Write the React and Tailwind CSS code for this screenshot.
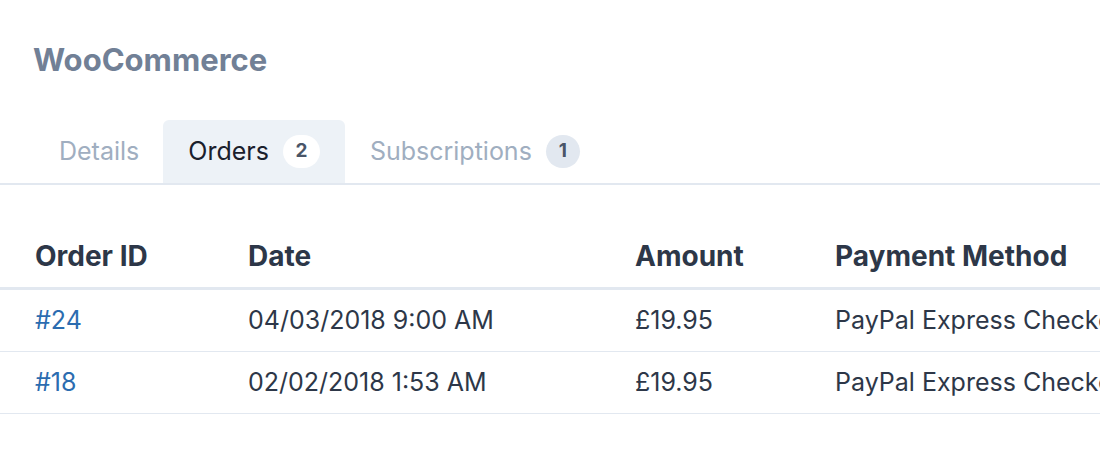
import React from 'react';

const orders = [
  { id: '#24', date: '04/03/2018 9:00 AM', amount: '£19.95', method: 'PayPal Express Checkout' },
  { id: '#18', date: '02/02/2018 1:53 AM', amount: '£19.95', method: 'PayPal Express Checkout' },
];

export default function App() {
  return (
    <div className="w-[1100px] h-[450px] overflow-hidden bg-white font-['Inter',sans-serif]">
      <h2 className="pl-[33px] pt-[42px] text-[31px] leading-[36px] font-bold text-[#718096]">WooCommerce</h2>

      {/* Tabs */}
      <div className="mt-[42px] flex px-[35px] border-b-2 border-[#e2e8f0] text-[25px]">
        <div className="h-[63px] px-[24px] flex items-center text-[#a0aec0]">Details</div>
        <div className="h-[63px] px-[25px] flex items-center rounded-t-md bg-[#edf2f7] text-[#1a202c]">
          Orders
          <span className="ml-[14px] h-[33px] min-w-[37px] px-2 rounded-full bg-white text-[#4a5568] text-[19px] font-bold flex items-center justify-center">2</span>
        </div>
        <div className="h-[63px] px-[25px] flex items-center text-[#a0aec0]">
          Subscriptions
          <span className="ml-[14px] h-[33px] min-w-[34px] px-2 rounded-full bg-[#e2e8f0] text-[#4a5568] text-[19px] font-bold flex items-center justify-center">1</span>
        </div>
      </div>

      {/* Orders table */}
      <div className="mt-[39px] text-[25px] text-[#2d3748] whitespace-nowrap">
        <div className="flex h-[66px] items-center border-b-[3px] border-[#e2e8f0] text-[28px] font-bold">
          <div className="w-[213px] shrink-0 pl-[35px]">Order ID</div>
          <div className="w-[387px] shrink-0 pl-[35px]">Date</div>
          <div className="w-[200px] shrink-0 pl-[35px]">Amount</div>
          <div className="flex-1 pl-[35px]">Payment Method</div>
        </div>
        {orders.map((o) => (
          <div key={o.id} className="flex h-[62px] items-center border-b border-[#e2e8f0]">
            <div className="w-[213px] shrink-0 pl-[35px] text-[#2b6cb0]">{o.id}</div>
            <div className="w-[387px] shrink-0 pl-[35px]">{o.date}</div>
            <div className="w-[200px] shrink-0 pl-[35px]">{o.amount}</div>
            <div className="flex-1 pl-[35px]">{o.method}</div>
          </div>
        ))}
      </div>
    </div>
  );
}
